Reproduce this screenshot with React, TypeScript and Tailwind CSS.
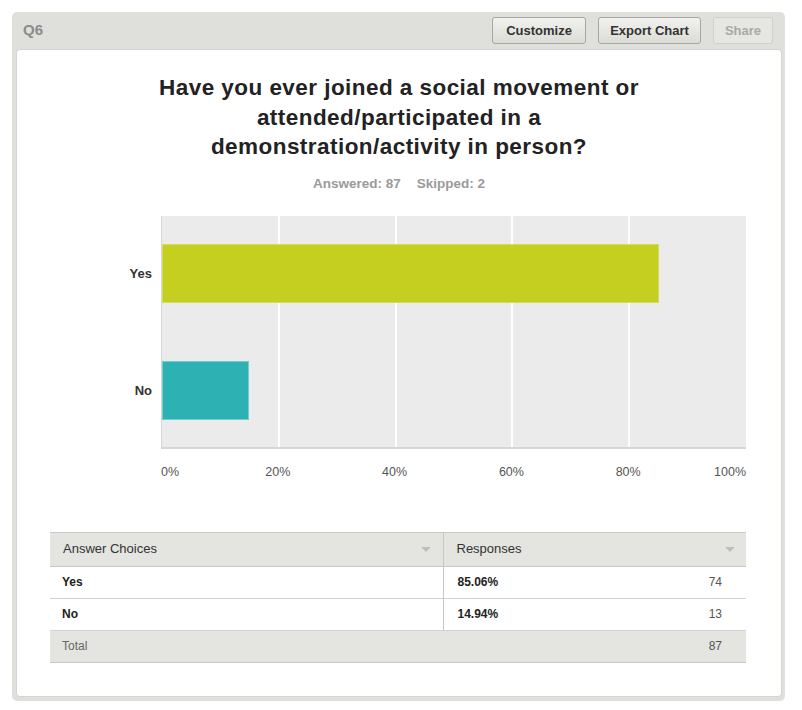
const font = { fontFamily: '"Liberation Sans", Arial, sans-serif' };

interface Answer {
  label: string;
  pct: number;
  count: number;
  color: string;
  edge: string;
}

const answers: Answer[] = [
  { label: 'Yes', pct: 85.06, count: 74, color: 'bg-[#c5cf1f]', edge: 'border-[#d4dc5c]' },
  { label: 'No', pct: 14.94, count: 13, color: 'bg-[#2db1b2]', edge: 'border-[#6fcfcf]' },
];

const ticks = [0, 20, 40, 60, 80, 100];

function HeaderButton({ children, width, disabled }: { children: string; width: string; disabled?: boolean }) {
  return (
    <button
      className={
        disabled
          ? `h-[27px] ${width} rounded-[3px] border border-[#cfcfcb] bg-[#e6e6e2] text-[13px] font-bold text-[#a9a9a6]`
          : `h-[27px] ${width} rounded-[3px] border border-[#a6a6a2] bg-gradient-to-b from-[#f1f1ed] to-[#dcdcd7] text-[13px] font-bold text-[#333]`
      }
    >
      {children}
    </button>
  );
}

function SortArrow() {
  return <span className="h-0 w-0 border-x-[5px] border-t-[5px] border-x-transparent border-t-[#bdbdbd]" />;
}

function BarChart() {
  return (
    <div className="mt-[23px] flex">
      <div className="flex w-[144px] flex-col items-end pr-[9px] pt-[29px] text-[13px] font-bold text-[#333]">
        <div className="flex h-[59px] items-center">Yes</div>
        <div className="mt-[58px] flex h-[59px] items-center">No</div>
      </div>
      <div className="w-[585px]">
        <div className="relative h-[233px] border-b-2 border-l border-[#d6d6d6] bg-[#ebebeb]">
          {[20, 40, 60, 80].map((t) => (
            <div
              key={t}
              className="absolute top-0 bottom-0 w-[2px] bg-white"
              style={{ left: `${(t / 100) * 584 - 1}px` }}
            />
          ))}
          <div className="relative flex flex-col pt-[28px]">
            {answers.map((a, i) => (
              <div
                key={a.label}
                className={`h-[59px] border ${a.color} ${a.edge} ${i > 0 ? 'mt-[58px]' : ''}`}
                style={{ width: `${(a.pct / 100) * 584}px` }}
              />
            ))}
          </div>
        </div>
        <div className="relative mt-[15px] h-[16px] text-[12.5px] leading-[16px] text-[#555]">
          {ticks.map((t) => (
            <span
              key={t}
              className={
                t === 0
                  ? 'absolute left-0'
                  : t === 100
                    ? 'absolute right-0'
                    : 'absolute -translate-x-1/2'
              }
              style={t === 0 || t === 100 ? undefined : { left: `${(t / 100) * 584}px` }}
            >
              {t}%
            </span>
          ))}
        </div>
      </div>
    </div>
  );
}

function ResultsTable() {
  return (
    <table className="ml-[33px] mt-[52px] w-[696px] border-collapse text-[12px]">
      <thead>
        <tr className="h-[34px] border-y border-[#c8c8c5] bg-[#e4e4e0] text-[13px] text-[#333]">
          <th className="w-[393px] border-r border-[#c8c8c5] pl-[13px] pr-3 text-left font-normal">
            <div className="flex items-center justify-between">
              Answer Choices
              <SortArrow />
            </div>
          </th>
          <th className="pl-[13px] pr-[11px] text-left font-normal" colSpan={2}>
            <div className="flex items-center justify-between">
              Responses
              <SortArrow />
            </div>
          </th>
        </tr>
      </thead>
      <tbody>
        {answers.map((a) => (
          <tr key={a.label} className="h-[32px] border-b border-[#d2d2cf]">
            <td className="border-r border-[#c8c8c5] pl-3 font-bold text-[#222]">{a.label}</td>
            <td className="pl-[14px] font-bold text-[#222]">{a.pct.toFixed(2)}%</td>
            <td className="pr-6 text-right text-[#555]">{a.count}</td>
          </tr>
        ))}
        <tr className="h-[32px] border-b border-[#c8c8c5] bg-[#e4e4e0] text-[#666]">
          <td className="pl-3">Total</td>
          <td />
          <td className="pr-6 text-right text-[#555]">87</td>
        </tr>
      </tbody>
    </table>
  );
}

export default function App() {
  return (
    <div className="h-[710px] w-[802px] bg-white pl-[12px] pt-[12px]" style={font}>
      <div className="flex h-[689px] w-[773px] flex-col rounded-[5px] bg-[#dfdfdb] pb-[4px] pl-[4px] pr-[3px]">
        <div className="flex h-[37px] items-center justify-between pl-[7px] pr-[9px]">
          <span className="text-[15px] font-bold text-[#8c8c8a]">Q6</span>
          <div className="flex gap-[12px]">
            <HeaderButton width="w-[94px]">Customize</HeaderButton>
            <HeaderButton width="w-[103px]">Export Chart</HeaderButton>
            <HeaderButton width="w-[60px]" disabled>
              Share
            </HeaderButton>
          </div>
        </div>
        <div className="flex-1 rounded-[4px] border border-[#d4d4d0] bg-white">
          <h1 className="pt-[23px] text-center text-[22.5px] font-bold leading-[29.5px] tracking-[0.45px] text-[#222]">
            Have you ever joined a social movement or
            <br />
            attended/participated in a
            <br />
            demonstration/activity in person?
          </h1>
          <div className="mt-[13px] flex justify-center gap-4 text-[13.5px] font-bold leading-[18px] text-[#9a9a9a]">
            <span>Answered: 87</span>
            <span>Skipped: 2</span>
          </div>
          <BarChart />
          <ResultsTable />
        </div>
      </div>
    </div>
  );
}
